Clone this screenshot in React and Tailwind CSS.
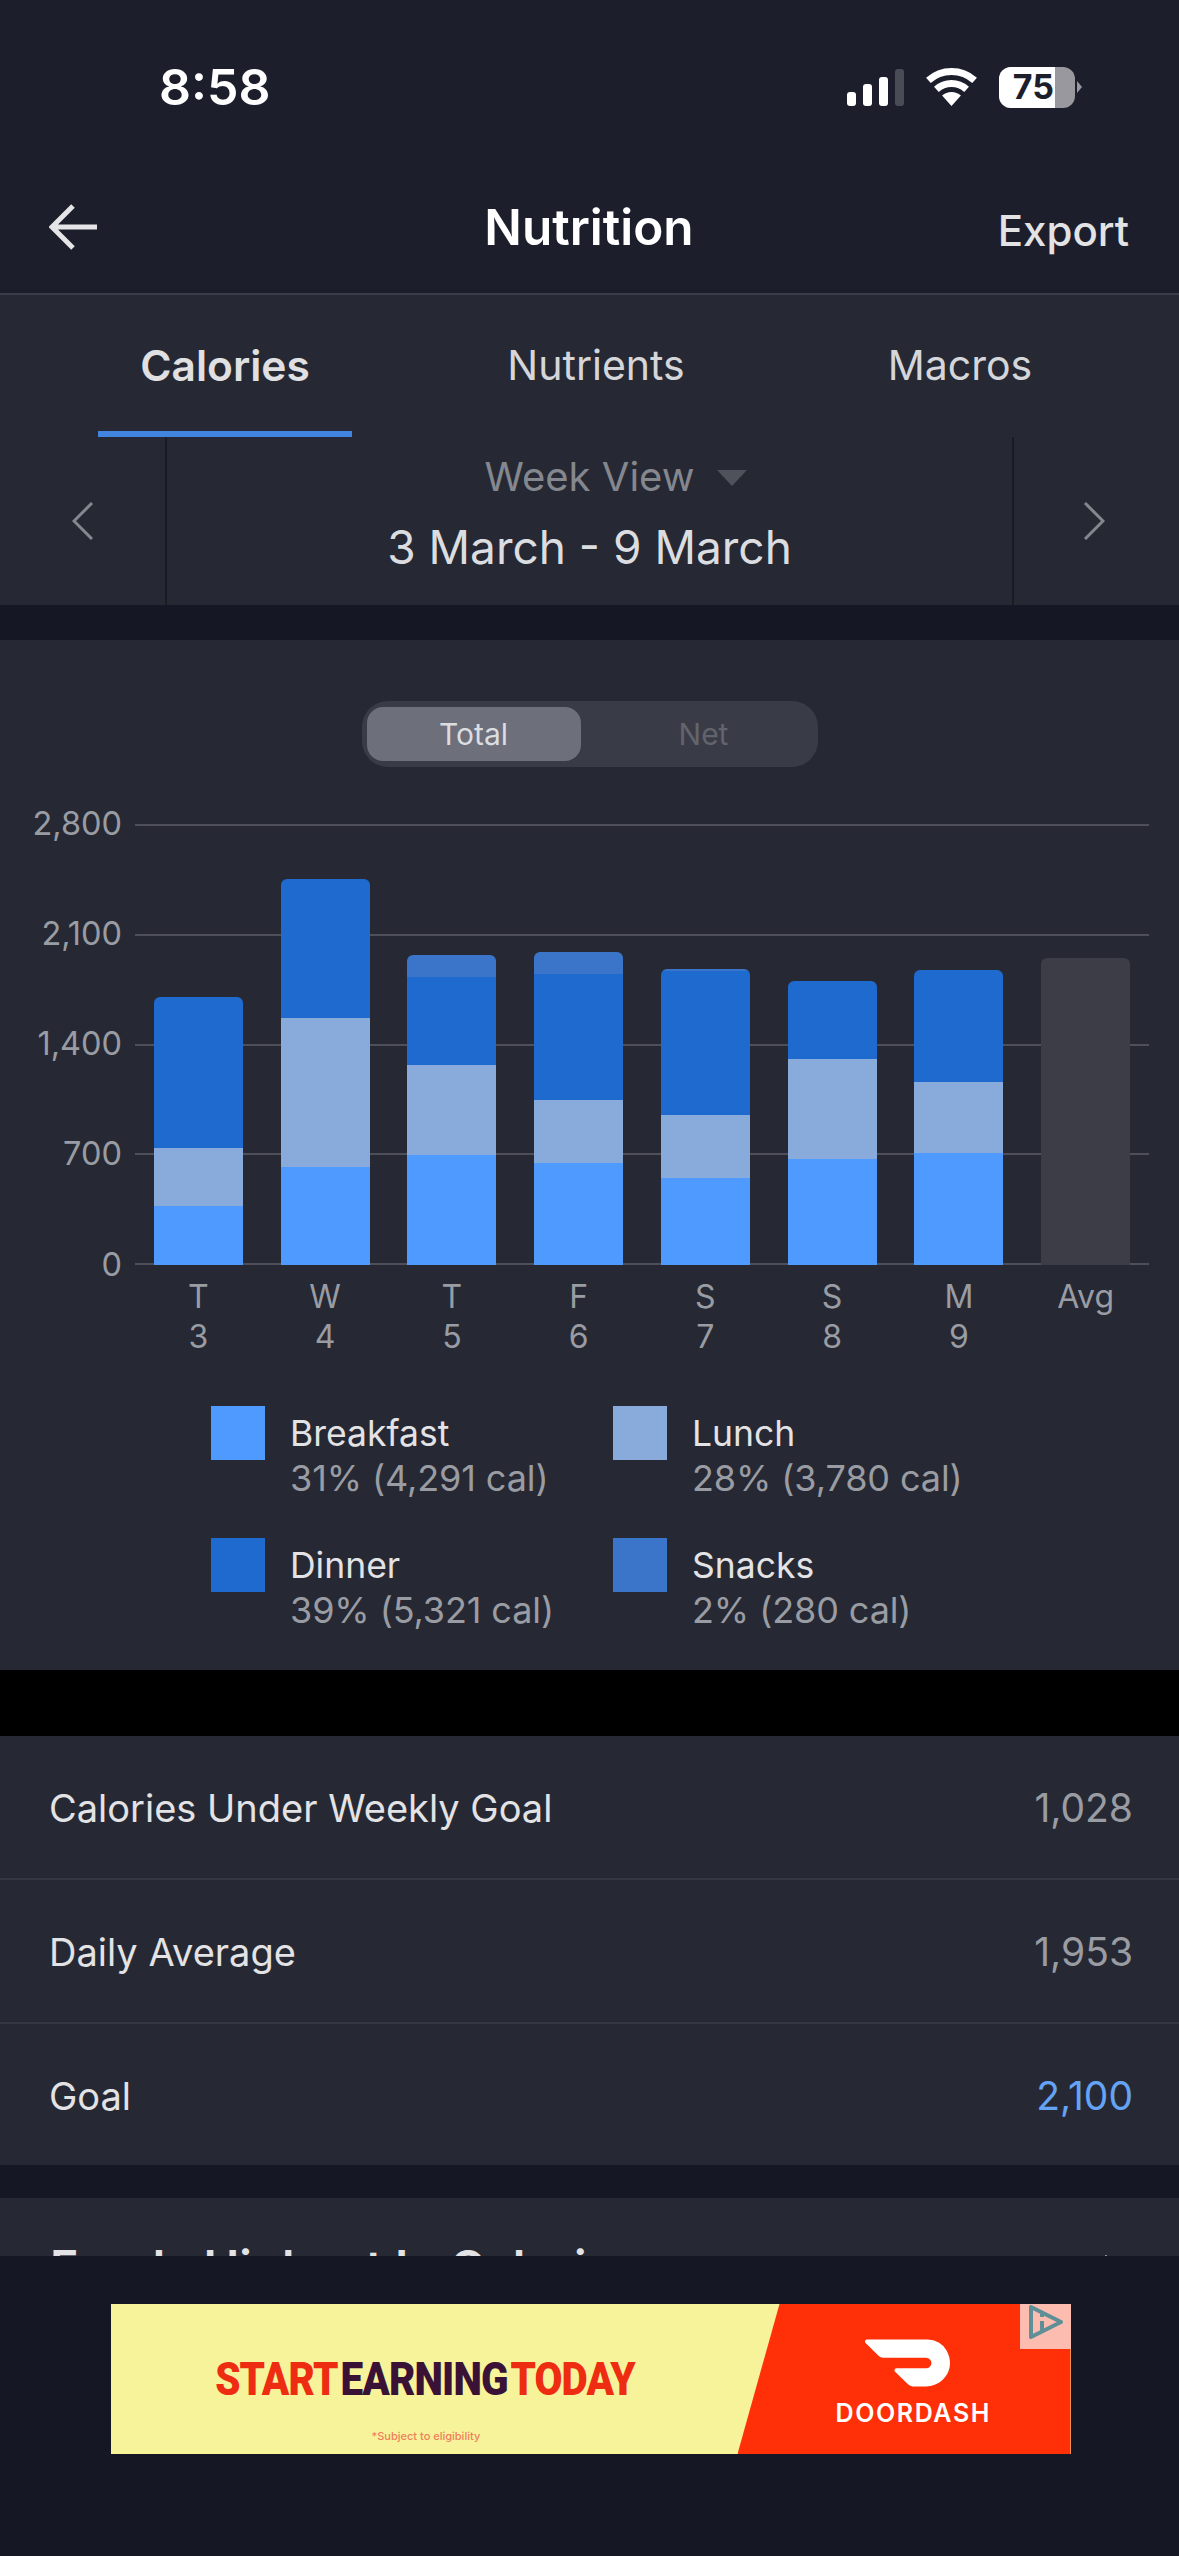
const days = [
  { d: 'T', n: '3', bars: [{ h: 59, c: 'bg-[#4f9aff]' }, { h: 58, c: 'bg-[#88abdb]' }, { h: 151, c: 'bg-[#1e6acf]' }] },
  { d: 'W', n: '4', bars: [{ h: 98, c: 'bg-[#4f9aff]' }, { h: 149, c: 'bg-[#88abdb]' }, { h: 139, c: 'bg-[#1e6acf]' }] },
  { d: 'T', n: '5', bars: [{ h: 110, c: 'bg-[#4f9aff]' }, { h: 90, c: 'bg-[#88abdb]' }, { h: 88, c: 'bg-[#1e6acf]' }, { h: 22, c: 'bg-[#3a75c9]' }] },
  { d: 'F', n: '6', bars: [{ h: 102, c: 'bg-[#4f9aff]' }, { h: 63, c: 'bg-[#88abdb]' }, { h: 126, c: 'bg-[#1e6acf]' }, { h: 22, c: 'bg-[#3a75c9]' }] },
  { d: 'S', n: '7', bars: [{ h: 87, c: 'bg-[#4f9aff]' }, { h: 63, c: 'bg-[#88abdb]' }, { h: 144, c: 'bg-[#1e6acf]' }, { h: 2, c: 'bg-[#3a75c9]' }] },
  { d: 'S', n: '8', bars: [{ h: 106, c: 'bg-[#4f9aff]' }, { h: 100, c: 'bg-[#88abdb]' }, { h: 78, c: 'bg-[#1e6acf]' }] },
  { d: 'M', n: '9', bars: [{ h: 112, c: 'bg-[#4f9aff]' }, { h: 71, c: 'bg-[#88abdb]' }, { h: 112, c: 'bg-[#1e6acf]' }] },
  { d: 'Avg', n: '', bars: [{ h: 307, c: 'bg-[#3d3d47]' }] },
];

const legend = [
  { name: 'Breakfast', sub: '31% (4,291 cal)', c: 'bg-[#4f9aff]' },
  { name: 'Lunch', sub: '28% (3,780 cal)', c: 'bg-[#88abdb]' },
  { name: 'Dinner', sub: '39% (5,321 cal)', c: 'bg-[#1e6acf]' },
  { name: 'Snacks', sub: '2% (280 cal)', c: 'bg-[#3a75c9]' },
];

const stats = [
  { label: 'Calories Under Weekly Goal', value: '1,028', color: 'text-[#9a9ca3]', row: 'h-[144px] pt-[3px] border-b-2 border-[#343741]' },
  { label: 'Daily Average', value: '1,953', color: 'text-[#9a9ca3]', row: 'h-[144px] pt-[3px] border-b-2 border-[#343741]' },
  { label: 'Goal', value: '2,100', color: 'text-[#64a3f5]', row: 'h-[141px] pt-[3px]' },
];

function StatusBar() {
  return (
    <div className="flex h-[174px] items-center justify-between pl-[159px] pr-[97px]">
      <span className="text-[50px] leading-none font-semibold text-white">8:58</span>
      <div className="flex items-center">
        <div className="flex h-[37px] items-end gap-[7px]">
          <div className="h-[14px] w-[9px] rounded-[3px] bg-white" />
          <div className="h-[22px] w-[9px] rounded-[3px] bg-white" />
          <div className="h-[29px] w-[9px] rounded-[3px] bg-white" />
          <div className="h-[37px] w-[9px] rounded-[3px] bg-[#4a4c55]" />
        </div>
        <svg className="ml-[22px]" width="51" height="38" viewBox="0 0 51 38" fill="none">
          <path d="M2.4 12.4A34.5 34.5 0 0 1 48.6 12.4" stroke="#fff" strokeWidth="7" />
          <path d="M10.4 21.3A22.5 22.5 0 0 1 40.6 21.3" stroke="#fff" strokeWidth="7" />
          <path d="M25.5 38L16.1 27.6A14 14 0 0 1 34.9 27.6Z" fill="#fff" />
        </svg>
        <div className="ml-[22px] flex h-[41px] w-[76px] overflow-hidden rounded-[12px] bg-[#98989e]">
          <div className="flex w-[56px] items-center justify-end bg-white pr-[1px] text-[34px] leading-none font-bold text-[#1c1f2b]">
            75
          </div>
        </div>
        <div className="ml-[2px] h-0 w-0 border-y-[6px] border-l-[5px] border-y-transparent border-l-[#98989e]" />
      </div>
    </div>
  );
}

function Chart() {
  return (
    <div className="flex pt-[57px]">
      <div className="flex h-[441px] w-[122px] flex-col justify-between">
        {['2,800', '2,100', '1,400', '700', '0'].map((v) => (
          <div key={v} className="flex h-0 items-center justify-end text-[32.5px] text-[#9a9ca3]">
            {v}
          </div>
        ))}
      </div>
      <div className="ml-[13px] w-[1014px]">
        <div className="relative h-[441px]">
          <div className="absolute inset-0 flex flex-col justify-between">
            {[0, 1, 2, 3, 4].map((i) => (
              <div key={i} className="h-0 border-t-2 border-[#4e4f59]" />
            ))}
          </div>
          <div className="absolute inset-0 grid grid-cols-8 items-end justify-items-center">
            {days.map((day, i) => (
              <div key={i} className="flex w-[89px] flex-col-reverse overflow-hidden rounded-t-[6px]">
                {day.bars.map((b, j) => (
                  <div key={j} className={b.c} style={{ height: b.h }} />
                ))}
              </div>
            ))}
          </div>
        </div>
        <div className="grid grid-cols-8 pt-[12px]">
          {days.map((day, i) => (
            <div key={i} className="flex flex-col items-center text-[32px] leading-[40px] text-[#9a9ca3]">
              <span>{day.d}</span>
              <span>{day.n}</span>
            </div>
          ))}
        </div>
      </div>
    </div>
  );
}

function AdBanner() {
  return (
    <div className="relative flex h-[150px] w-[960px] overflow-hidden bg-[#f7f39a]">
      <div className="absolute inset-y-0 left-[627px] right-0 bg-[#ff3008] [clip-path:polygon(42px_0,100%_0,100%_100%,0_100%)]" />
      <div className="relative ml-[103px] mt-[50px] flex h-[50px] w-[423px] justify-center overflow-visible">
        <span className="inline-block shrink-0 scale-x-[0.86] text-[47px] leading-[50px] font-black tracking-[-1px] whitespace-nowrap text-[#ee2c12] [word-spacing:-6px] font-['Roboto',sans-serif]">
          START <span className="text-[#3a1236]">EARNING</span> TODAY
        </span>
      </div>
      <span className="absolute left-[261px] top-[125px] text-[11px] leading-[14px] font-medium whitespace-nowrap text-[#ef7f5a]">
        *Subject to eligibility
      </span>
      <svg className="absolute left-[754px] top-[35px]" width="85" height="48" viewBox="0 5 24 14" preserveAspectRatio="none">
        <path
          fill="#fff"
          d="M23.071 8.409a6.09 6.09 0 00-5.396-3.228H.584A.589.589 0 00.17 6.184L3.894 9.93a1.752 1.752 0 001.242.516h12.049a1.554 1.554 0 11.031 3.108H8.91a.589.589 0 00-.415 1.003l3.725 3.747a1.75 1.75 0 001.242.516h3.757c4.887 0 8.584-5.225 5.852-10.413"
        />
      </svg>
      <span className="absolute left-[725px] top-[96px] text-[25px] leading-[26px] font-semibold tracking-[1.6px] whitespace-nowrap text-white">
        DOORDASH
      </span>
      <div className="absolute right-0 top-0 h-[45px] w-[51px] bg-[#fcbdb0]">
        <svg className="absolute left-[8px] top-0" width="36" height="36" viewBox="0 0 36 36" fill="none" stroke="#5f8f96">
          <path d="M3 3L33 18L3 33Z" strokeWidth="4" strokeLinejoin="round" />
          <path d="M14 17V26M14 10V13" strokeWidth="4" />
        </svg>
      </div>
    </div>
  );
}

export default function App() {
  return (
    <div className="flex h-[2556px] w-[1179px] flex-col overflow-hidden bg-[#151824] font-['Inter',sans-serif]">
      <div className="h-[2256px] shrink-0 overflow-hidden">
        <div className="h-[293px] bg-[#1c1f2b]">
          <StatusBar />
          <div className="grid h-[106px] grid-cols-3 items-center pl-[49px] pr-[50px]">
            <svg width="48" height="46" viewBox="0 0 48 46" fill="none" stroke="#e5e5e7" strokeWidth="5">
              <path d="M24 2L3 23L24 44M3 23H48" />
            </svg>
            <span className="text-center text-[49.5px] font-semibold text-white">Nutrition</span>
            <span className="mt-[6px] text-right text-[42px] font-medium text-[#e3e3e6]">Export</span>
          </div>
        </div>

        <div className="flex h-[144px] border-t-2 border-[#3a3d47] bg-[#262933] pl-[98px]">
          <div className="flex w-[254px] items-center justify-center border-b-[6px] border-[#4285e0] pt-[6px] text-[42.5px] font-semibold text-[#e0e0e3]">
            Calories
          </div>
          <div className="flex w-[488px] items-center justify-center text-[41px] text-[#d5d6da]">Nutrients</div>
          <div className="flex w-[240px] items-center justify-center text-[41px] text-[#d5d6da]">Macros</div>
        </div>

        <div className="grid h-[168px] grid-cols-[167px_1fr_167px] bg-[#262933]">
          <div className="flex items-center justify-center border-r-2 border-[#191b24]">
            <svg width="22" height="38" viewBox="0 0 22 38" fill="none" stroke="#85878f" strokeWidth="3">
              <path d="M20 1L2 19L20 37" />
            </svg>
          </div>
          <div className="flex flex-col items-center pt-[15px]">
            <div className="relative h-[50px] text-[40px] leading-[50px] text-[#85878f]">
              Week View
              <div className="absolute left-[232px] top-[18px] h-0 w-0 border-x-[15px] border-t-[16px] border-x-transparent border-t-[#4f515b]" />
            </div>
            <div className="mt-[20px] text-[46px] leading-[50px] text-[#dcdde0]">3 March - 9 March</div>
          </div>
          <div className="flex items-center justify-center border-l-2 border-[#191b24] pr-[5px]">
            <svg width="22" height="38" viewBox="0 0 22 38" fill="none" stroke="#85878f" strokeWidth="3">
              <path d="M2 1L20 19L2 37" />
            </svg>
          </div>
        </div>

        <div className="h-[35px] bg-[#151824]" />

        <div className="h-[1030px] bg-[#262933] pt-[61px]">
          <div className="mx-auto flex h-[66px] w-[456px] items-center rounded-[26px] bg-[#393b46] pl-[5px] text-[30px]">
            <div className="flex h-[54px] w-[214px] items-center justify-center rounded-[16px] bg-[#6d6f7a] text-[#dcdde0]">
              Total
            </div>
            <div className="flex w-[230px] justify-center pl-[16px] text-[#62646d]">Net</div>
          </div>

          <Chart />

          <div className="grid grid-cols-[402px_1fr] gap-y-[42px] pl-[211px] pt-[49px]">
            {legend.map((l) => (
              <div key={l.name} className="flex">
                <div className={`h-[54px] w-[54px] shrink-0 ${l.c}`} />
                <div className="ml-[25px] flex flex-col pt-[1px]">
                  <span className="text-[35.5px] leading-[54px] text-[#e3e3e6]">{l.name}</span>
                  <span className="text-[36px] leading-[35px] tracking-[-0.1px] text-[#9a9ca3]">{l.sub}</span>
                </div>
              </div>
            ))}
          </div>
        </div>

        <div className="h-[66px] bg-black" />

        <div className="bg-[#262933]">
          {stats.map((s) => (
            <div key={s.label} className={`flex items-center justify-between pl-[49px] pr-[46px] ${s.row}`}>
              <span className="text-[38px] text-[#e3e3e6]">{s.label}</span>
              <span className={`text-[39px] ${s.color}`}>{s.value}</span>
            </div>
          ))}
        </div>

        <div className="h-[33px] bg-[#151824]" />

        <div className="flex h-[58px] items-start justify-between bg-[#262933] pl-[50px] pr-[62px] pt-[42px]">
          <span className="text-[48px] leading-[56px] font-semibold text-[#e3e3e6]">Foods Highest In Calories</span>
          <svg className="mt-[14px]" width="22" height="14" viewBox="0 0 22 14" fill="none" stroke="#e3e3e6" strokeWidth="3">
            <path d="M1 13L11 3L21 13" />
          </svg>
        </div>
      </div>

      <div className="flex flex-1 justify-center pl-[2px] pt-[48px]">
        <AdBanner />
      </div>
    </div>
  );
}
